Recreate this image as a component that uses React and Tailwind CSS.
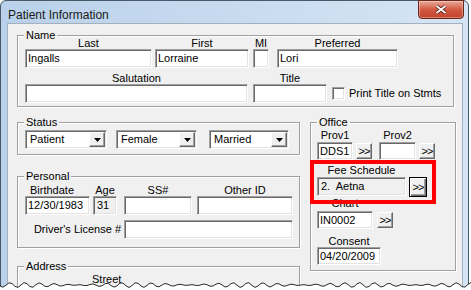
import React from 'react';

const SUNKEN =
  'border border-t-[#a0a0a0] border-l-[#a0a0a0] border-r-white border-b-white shadow-[inset_1px_1px_0_#696969,inset_-1px_-1px_0_#e3e3e3]';
const RAISED =
  'border border-t-white border-l-white border-r-[#696969] border-b-[#696969] shadow-[inset_-1px_-1px_0_#a0a0a0] bg-[#f0f0f0]';

const Field = ({ className = '', value, ro }) => (
  <div
    className={`${SUNKEN} ${ro ? 'bg-[#f0f0f0]' : 'bg-white'} ${className} flex items-center pl-[2px] text-[11px] leading-none text-black whitespace-pre overflow-hidden`}
  >
    {value}
  </div>
);

const Btn = ({ className = '', def }) => (
  <div
    className={`${
      def
        ? 'border border-black bg-[#f0f0f0] shadow-[inset_1px_1px_0_#fff,inset_-1px_-1px_0_#696969,inset_-2px_-2px_0_#a0a0a0]'
        : RAISED
    } ${className} flex items-center justify-center text-[11px] leading-none text-black tracking-[-1px]`}
  >
    &gt;&gt;
  </div>
);

const Combo = ({ className = '', value }) => (
  <div className={`${SUNKEN} bg-white ${className} h-[19px] flex p-[1px]`}>
    <div className="flex-1 flex items-center pl-[3px] text-[11px] leading-none">{value}</div>
    <div className={`${RAISED} w-[16px] h-full flex items-center justify-center`}>
      <svg width="7" height="4" viewBox="0 0 7 4">
        <polygon points="0,0 7,0 3.5,4" fill="#000" />
      </svg>
    </div>
  </div>
);

const Group = ({ label, className = '', children }) => (
  <div className={`relative border border-[#a0a0a0] shadow-[inset_1px_1px_0_#fff,1px_1px_0_#fff] ${className}`}>
    <span className="absolute left-[6px] top-[-7px] px-[2px] bg-[#f0f0f0] leading-[12px] text-[11px] whitespace-nowrap">
      {label}
    </span>
    {children}
  </div>
);

const Col = ({ label, className = '', children, labelClass = 'text-center' }) => (
  <div className={`flex flex-col ${className}`}>
    <div className={`h-[12px] leading-[12px] text-[11px] whitespace-nowrap ${labelClass}`}>{label}</div>
    {children}
  </div>
);

// jagged torn-paper edge along the bottom
const tearLine = (() => {
  let d = 'M0,5';
  for (let x = 0; x <= 474; x += 3) {
    const y = 5 + Math.sin(x * 0.45) * 1.4 + Math.sin(x * 1.7 + 2) * 1.1;
    d += ` L${x},${y.toFixed(1)}`;
  }
  return d;
})();

export default function App() {
  return (
    <div className="w-[471px] h-[290px] bg-white relative overflow-hidden font-['Liberation_Sans',Arial,sans-serif] text-black">
      <div className="w-[469px] h-[290px] rounded-t-[6px] border border-[#4a5868] bg-linear-to-r from-[#b9d1ea] to-[#d6e5f5] flex flex-col">
        {/* title bar */}
        <div className="h-[27px] flex justify-between items-start">
          <div className="pl-[7px] pt-[7px] text-[12px] leading-[15px] text-[#1a1a1a]">Patient Information</div>
          <div className="-mt-[1px] mr-[4px] w-[46px] h-[19px] rounded-b-[4px] border border-[#6a2418] bg-linear-to-b from-[#e9a898] via-[#d25a43] to-[#c2412a] flex items-center justify-center shadow-[inset_0_0_0_1px_rgba(255,255,255,0.35)]">
            <svg width="12" height="9" viewBox="0 0 12 9">
              <path d="M1.5,1 L10.5,8 M10.5,1 L1.5,8" stroke="#4a1a12" strokeWidth="3.4" />
              <path d="M1.5,1 L10.5,8 M10.5,1 L1.5,8" stroke="#fff" strokeWidth="1.8" />
            </svg>
          </div>
        </div>

        {/* client area */}
        <div className="flex-1 flex pl-[6px] pr-[5px]">
          <div className="w-[456px] border-l border-t border-r border-[#a3b0be] bg-[#f0f0f0] pl-[9px] pt-[11px] text-[11px]">
            {/* Name */}
            <Group label="Name" className="w-[437px] pt-[1px] pb-[3px] pl-[7px]">
              <div className="flex">
                <Col label="Last" className="w-[127px]">
                  <Field className="h-[19px]" value="Ingalls" />
                </Col>
                <Col label="First" className="w-[94px] ml-[3px]">
                  <Field className="h-[19px]" value="Lorraine" />
                </Col>
                <Col label="MI" className="w-[16px] ml-[4px]">
                  <Field className="h-[19px]" value="" />
                </Col>
                <Col label="Preferred" className="w-[121px] ml-[8px]">
                  <Field className="h-[19px]" value="Lori" />
                </Col>
              </div>
              <div className="flex mt-[4px] items-end">
                <Col label="Salutation" className="w-[223px]">
                  <Field className="h-[19px]" value="" />
                </Col>
                <Col label="Title" className="w-[74px] ml-[5px]">
                  <Field className="h-[19px]" value="" />
                </Col>
                <div className="h-[19px] ml-[5px] flex items-center">
                  <div className={`${SUNKEN} bg-white w-[13px] h-[13px]`} />
                  <span className="ml-[4px] text-[11px] leading-none whitespace-nowrap">Print Title on Stmts</span>
                </div>
              </div>
            </Group>

            <div className="flex mt-[15px] items-start">
              {/* left column */}
              <div className="w-[283px] flex flex-col">
                <Group label="Status" className="pt-[7px] pb-[5px] pl-[7px]">
                  <div className="flex">
                    <Combo className="w-[82px]" value="Patient" />
                    <Combo className="w-[81px] ml-[9px]" value="Female" />
                    <Combo className="w-[80px] ml-[12px]" value="Married" />
                  </div>
                </Group>

                <Group label="Personal" className="mt-[21px] pt-[7px] pb-[8px] pl-[7px]">
                  <div className="flex">
                    <Col label="Birthdate" className="w-[65px]" labelClass="text-left pl-[5px]">
                      <Field className="h-[19px]" value="12/30/1983" />
                    </Col>
                    <Col label="Age" className="w-[24px] ml-[3px]">
                      <Field ro className="h-[19px] pl-[3px]" value="31" />
                    </Col>
                    <Col label="SS#" className="w-[68px] ml-[7px]">
                      <Field className="h-[19px]" value="" />
                    </Col>
                    <Col label="Other ID" className="w-[96px] ml-[5px]">
                      <Field className="h-[19px]" value="" />
                    </Col>
                  </div>
                  <div className="flex items-center mt-[5px]">
                    <div className="w-[96px] text-right text-[11px] leading-none whitespace-nowrap">Driver's License #</div>
                    <Field className="h-[19px] w-[169px] ml-[3px]" value="" />
                  </div>
                </Group>

                <Group label="Address" className="mt-[18px] h-[40px] pt-[6px] pl-[74px]">
                  <div className="leading-[12px] text-[11px]">Street</div>
                </Group>
              </div>

              {/* Office */}
              <Group label="Office" className="w-[146px] ml-[10px] pt-[6px] pb-[5px] pl-[6px]">
                <div className="flex">
                  <div className="flex flex-col w-[36px]">
                    <div className="h-[13px] leading-[13px] text-center">Prov1</div>
                    <Field className="h-[18px]" value="DDS1" />
                  </div>
                  <Btn className="w-[16px] h-[16px] ml-[3px] mt-[14px]" />
                  <div className="flex flex-col w-[37px] ml-[7px]">
                    <div className="h-[13px] leading-[13px] text-center">Prov2</div>
                    <Field className="h-[18px]" value="" />
                  </div>
                  <Btn className="w-[16px] h-[16px] ml-[3px] mt-[14px]" />
                </div>

                <div className="mt-[4px] w-[89px] h-[13px] leading-[13px] text-center whitespace-nowrap">Fee Schedule</div>
                <div className="flex items-start">
                  <Field ro className="w-[89px] h-[19px] pl-[3px]" value="2.  Aetna" />
                  <Btn def className="w-[18px] h-[20px] ml-[3px]" />
                </div>

                <div className="w-[56px] h-[13px] leading-[13px] text-center">Chart</div>
                <div className="flex items-start mt-[1px]">
                  <Field className="w-[56px] h-[18px]" value="IN0002" />
                  <Btn className="w-[16px] h-[16px] ml-[4px] mt-[1px]" />
                </div>

                <div className="mt-[6px] w-[64px] h-[12px] leading-[12px] text-center">Consent</div>
                <Field className="w-[64px] h-[18px]" value="04/20/2009" />

                {/* highlight annotation */}
                <div className="absolute left-[-1px] top-[37px] w-[126px] h-[44px] border-4 border-[#ff0000] pointer-events-none" />
              </Group>
            </div>
          </div>
        </div>
      </div>

      {/* torn bottom edge */}
      <svg className="absolute left-0 bottom-0" width="471" height="10" viewBox="0 0 471 10">
        <path d={`${tearLine} L474,10 L0,10 Z`} fill="#fff" />
        <path d={tearLine} fill="none" stroke="#2a2a2a" strokeWidth="1" />
      </svg>
    </div>
  );
}
